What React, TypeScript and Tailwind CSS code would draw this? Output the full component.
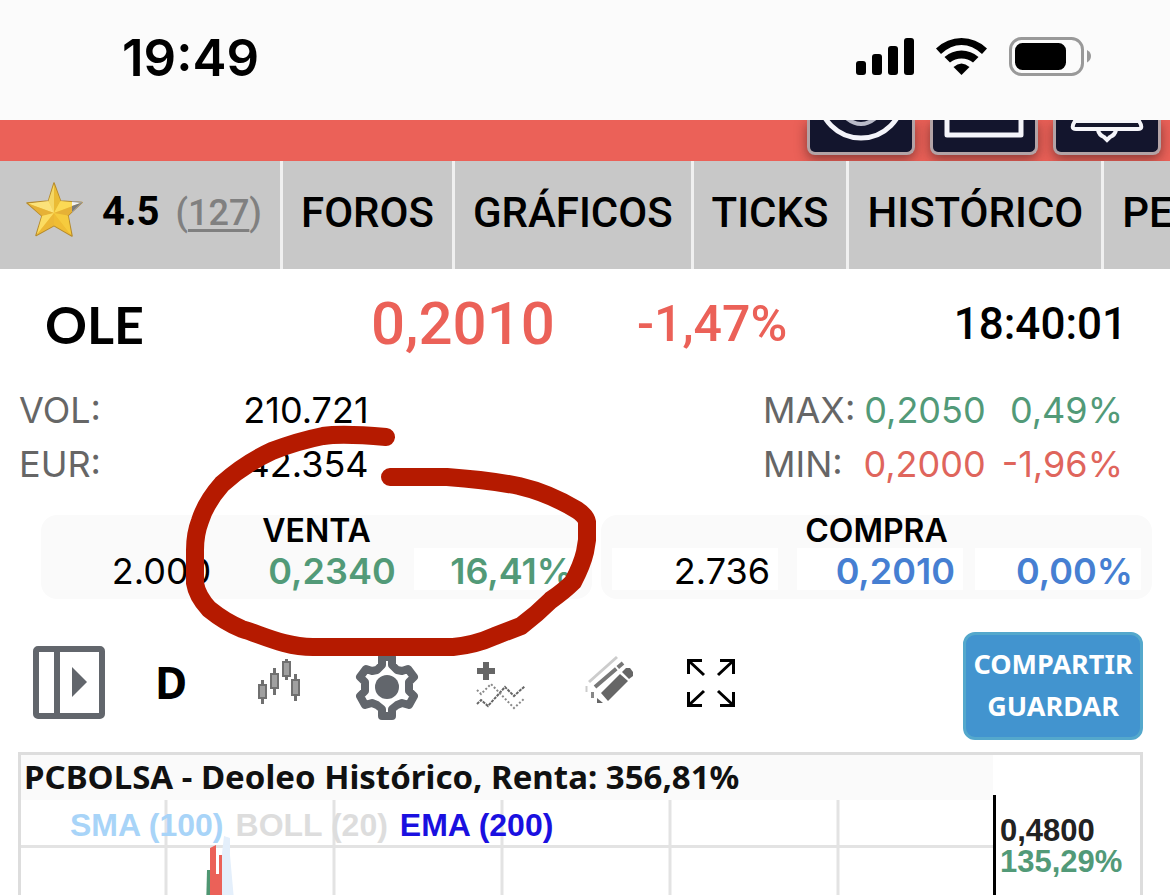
import React from 'react';

const tabs = ['FOROS', 'GRÁFICOS', 'TICKS', 'HISTÓRICO', 'PERFIL'];

const legend = [
  { label: 'SMA (100)', className: 'text-[#a8d4f8]' },
  { label: 'BOLL (20)', className: 'text-[#dddddd]' },
  { label: 'EMA (200)', className: 'text-[#1a10e0]' },
];

const StatusBar: React.FC = () => (
  <header className="flex h-[120px] shrink-0 items-start justify-between bg-[#fbfbfb] pl-[122px] pr-[79px] pt-[28px]">
    <time className="text-[51px] font-semibold leading-[60px]">19:49</time>
    <svg className="mt-[6px] h-[44px] w-[236px]" viewBox="855 34 236 44" role="img" aria-label="Cobertura, wifi y batería">
      <rect x="856" y="61" width="10" height="14" rx="3" />
      <rect x="872" y="54" width="10" height="21" rx="3" />
      <rect x="888" y="46" width="10" height="29" rx="3" />
      <rect x="904" y="38" width="10" height="37" rx="3" />
      <path d="M936 48.500Q947 38 961.500 38T987 48.500L982 54Q972.500 45 961.500 45T941 54Z" />
      <path d="M944.500 57Q952 50.500 961.500 50.500T978.500 57L973 62.500Q968 58.500 961.500 58.500T950 62.500Z" />
      <path d="M953.500 67Q961.500 60 969.500 67L961.500 75Z" />
      <rect x="1010.500" y="38.500" width="72" height="36" rx="11" fill="none" stroke="#999" strokeWidth="3" />
      <rect x="1015" y="43" width="51" height="27" rx="7.500" />
      <path d="M1087 50Q1091 52 1091 56T1087 62.500Z" fill="#999" />
    </svg>
  </header>
);

const headerButton =
  'h-[35px] w-[108px] rounded-b-lg border-3 border-t-0 border-[#b3a3a6] bg-[#13152d] shadow-[0_4px_12px_rgba(40,20,20,0.5)]';

const HeaderStrip: React.FC = () => (
  <div className="flex h-[41px] shrink-0 items-start justify-end gap-[15px] overflow-hidden bg-[#eb6158] pr-[9px]">
    <button className={headerButton} aria-label="Cuenta">
      <svg className="h-8 w-full" viewBox="0 0 102 32" fill="none" stroke="#f4f4fa" strokeWidth="5">
        <circle cx="51" cy="-24" r="42" />
        <path d="M33 -5Q51 13 69 -5" stroke="#b9bac8" strokeWidth="4" />
      </svg>
    </button>
    <button className={headerButton} aria-label="Mensajes">
      <svg className="h-8 w-full" viewBox="0 0 102 32" fill="none" stroke="#f4f4fa" strokeWidth="5">
        <path d="M14 -4V15H88V-4" strokeLinejoin="round" />
      </svg>
    </button>
    <button className={headerButton} aria-label="Avisos">
      <svg className="h-8 w-full" viewBox="0 0 102 32" fill="none" stroke="#f4f4fa" strokeWidth="4">
        <path d="M19 1H83Q88 9 82 9H20Q14 9 19 1Z" />
        <path d="M42 10Q43 15 48 17L51 20L54 17Q59 15 60 10" />
      </svg>
    </button>
  </div>
);

const Star: React.FC = () => (
  <svg className="h-[56px] w-[58px] shrink-0" viewBox="26 182 58 56" aria-hidden="true">
    <path
      d="M54 183L60.500 201L82 202.500L68 215.500L72 236L54 225.500L36 235.500L42 216L27 203L48.500 201Z"
      fill="#f7cd3c"
      stroke="#b58a2c"
      strokeWidth="1.500"
      strokeLinejoin="round"
    />
    <path d="M54 184L54 213L48.500 201Z" fill="#f4d765" />
    <path d="M54 184L60.500 201L54 213Z" fill="#eabb35" />
    <path d="M28 203.500L48.500 201L54 213Z" fill="#fbe27a" />
    <path d="M28 203.500L54 213L42 216Z" fill="#e6b136" />
    <path d="M42 216L54 213L36.500 235Z" fill="#fbdc62" />
    <path d="M54 213L54 225.500L36.500 235Z" fill="#ecb836" />
    <path d="M54 213L71.500 235.500L54 225.500Z" fill="#f0bd34" />
    <path d="M54 213L68 215.500L71.500 235.500Z" fill="#f6cb3e" />
    <path d="M60.500 201L81 203L54 213Z" fill="#fbd955" />
    <path d="M81 203L68 215.500L54 213Z" fill="#e6b136" />
    <path d="M72 201.500L82 202.500L72 206Z" fill="#f3f3f3" />
    <path d="M82 202.500L72 212V206Z" fill="#7c7c7c" />
    <path d="M72 201.500L82 202.500L72 212" fill="none" stroke="#999" strokeWidth="1" />
  </svg>
);

const Tabs: React.FC = () => (
  <nav className="flex h-[108px] shrink-0 overflow-hidden bg-[#c8c8c8] font-['Roboto',sans-serif] text-[42px] font-medium leading-[104px]">
    <div className="flex w-[280px] shrink-0 items-start pl-[26px]">
      <div className="pt-[21px]">
        <Star />
      </div>
      <span className="ml-[18px] text-[40px] font-bold leading-[102px]">4.5</span>
      <span className="ml-[16px] text-[36px] text-[#808080]">
        (
        <a href="#votos" className="underline decoration-3 underline-offset-4">
          127
        </a>
        )
      </span>
    </div>
    {tabs.map((tab) => (
      <a key={tab} href={`#${tab.toLowerCase()}`} className="shrink-0 border-l-3 border-[#f0f0f0] px-[18px]">
        {tab}
      </a>
    ))}
  </nav>
);

const Quote: React.FC = () => (
  <section className="grid h-[93px] shrink-0 grid-cols-[326fr_266fr_490fr] items-center pl-[45px] pr-[43px] pt-[16px] font-['Roboto',sans-serif] font-medium leading-[76px]">
    <h1 className="font-['Lato',sans-serif] text-[52px] font-bold">OLE</h1>
    <strong className="text-[60px] font-medium text-[#eb6158]">0,2010</strong>
    <div className="flex items-center justify-between">
      <span className="text-[50px] text-[#eb6158]">-1,47%</span>
      <time className="text-[44px]">18:40:01</time>
    </div>
  </section>
);

const Stats: React.FC = () => (
  <table className="mt-[21px] w-full shrink-0 table-fixed text-[36px] leading-[54px]">
    <colgroup>
      <col className="w-[15%]" />
      <col />
      <col className="w-[42%]" />
      <col className="w-[11%]" />
      <col className="w-[15.5%]" />
    </colgroup>
    <tbody>
      <tr>
        <th scope="row" className="pl-[19px] text-left font-normal text-[#666]">VOL:</th>
        <td className="text-right">210.721</td>
        <th scope="row" className="pr-[5px] text-right font-normal text-[#666]">
          <span className="inline-block w-[92px] text-left">MAX:</span>
        </th>
        <td className="pr-[3px] text-right text-[#529a78]">0,2050</td>
        <td className="pr-[47px] text-right text-[#529a78]">0,49%</td>
      </tr>
      <tr>
        <th scope="row" className="pl-[19px] text-left font-normal text-[#666]">EUR:</th>
        <td className="text-right">42.354</td>
        <th scope="row" className="pr-[5px] text-right font-normal text-[#666]">
          <span className="inline-block w-[92px] text-left">MIN:</span>
        </th>
        <td className="pr-[3px] text-right text-[#df655c]">0,2000</td>
        <td className="pr-[47px] text-right text-[#df655c]">-1,96%</td>
      </tr>
    </tbody>
  </table>
);

const OrderBook: React.FC = () => (
  <section className="mt-6 flex shrink-0 gap-[9px] pl-[41px] pr-[18px]">
    <div className="h-[84px] flex-1 rounded-2xl bg-[#fafafa] px-[11px]">
      <h2 className="text-center text-[32px] font-semibold leading-[32px]">VENTA</h2>
      <div className="mt-px flex text-right text-[36px] leading-[46px]">
        <span className="mr-[19px] flex-1 pr-[6px]">2.000</span>
        <span className="mr-3 flex-1 pr-[6px] font-semibold text-[#529a78]">0,2340</span>
        <span className="h-[42px] flex-1 bg-white pr-2 font-semibold text-[#529a78]">16,41%</span>
      </div>
    </div>
    <div className="h-[84px] flex-1 rounded-2xl bg-[#fafafa] px-[11px]">
      <h2 className="text-center text-[32px] font-semibold leading-[32px]">COMPRA</h2>
      <div className="mt-px flex text-right text-[36px] leading-[46px]">
        <span className="mr-[19px] h-[42px] flex-1 bg-white pr-2">2.736</span>
        <span className="mr-3 h-[42px] flex-1 bg-white pr-2 font-semibold text-[#467fd2]">0,2010</span>
        <span className="h-[42px] flex-1 bg-white pr-2 font-semibold text-[#467fd2]">0,00%</span>
      </div>
    </div>
  </section>
);

const Toolbar: React.FC = () => (
  <section className="mt-[33px] flex h-[108px] shrink-0 pl-[33px] pr-[27px]">
    <button className="flex w-[72px] items-start pt-[14px]" aria-label="Abrir panel">
      <svg className="h-[73px] w-[72px]" viewBox="0 0 72 73">
        <rect x="3" y="3" width="66" height="67" rx="2" fill="none" stroke="#62666c" strokeWidth="6" />
        <path d="M24 3V70" stroke="#62666c" strokeWidth="6" />
        <path d="M39 21L54 36L39 51Z" fill="#62666c" />
      </svg>
    </button>
    <button className="w-[132px] pb-[9px] font-['Noto_Sans',sans-serif] text-[44px] font-bold">D</button>
    <button className="flex w-[84px] items-start justify-center pt-[26px]" aria-label="Tipo de gráfico">
      <svg className="h-[46px] w-[44px]" viewBox="257 658 44 46" stroke="#707070" strokeWidth="2" fill="#a0a0a0">
        <path d="M262.500 680V704M274.500 668V695M286.500 659V680M295.500 674V701" strokeWidth="3" />
        <rect x="259" y="685" width="7" height="13" />
        <rect x="271" y="674" width="7" height="14" />
        <rect x="283" y="662" width="7" height="14" />
        <rect x="292" y="680" width="7" height="15" />
      </svg>
    </button>
    <button className="flex w-[132px] items-start justify-center pt-[22px]" aria-label="Ajustes">
      <svg className="h-[66px] w-[66px]" viewBox="0 0 66 66">
        <path
          d="M28 3H38V11L43 16L48 17L54 15L60 23L55 28V37L60 42L55 51L48 49L43 51L38 55V62H28V55L23 51L18 49L11 51L6 42L11 37V28L6 23L12 15L18 17L23 16L28 11Z"
          fill="none"
          stroke="#62666c"
          strokeWidth="8"
          strokeLinejoin="round"
        />
        <circle cx="33" cy="33" r="12" fill="#62666c" />
      </svg>
    </button>
    <button className="flex w-[96px] items-start justify-center pt-[28px]" aria-label="Añadir indicador">
      <svg className="h-[52px] w-[52px]" viewBox="475 660 52 52" fill="none" stroke="#666">
        <path d="M477 671H495M486 662V680" strokeWidth="6" />
        <path d="M477 704L481 700L488 706L505 687L514 696L525 686" strokeWidth="2" strokeDasharray="3 1" />
        <path d="M477 690L481 694L491 684L514 708L525 698" strokeWidth="2" stroke="#888" strokeDasharray="2 2" />
      </svg>
    </button>
    <button className="flex w-[120px] items-start justify-center pt-[23px]" aria-label="Dibujar">
      <svg className="h-[52px] w-[50px]" viewBox="584 655 50 52">
        <path d="M601 693L620 674L628 681L608 701Z" fill="#666" />
        <path d="M622 672L626 668H630L633 672V676L629 679Z" fill="#666" />
        <path d="M597 698L603 703H597Z" fill="#666" />
        <path d="M595 687L623 663" stroke="#777" strokeWidth="4" strokeDasharray="28 2" />
        <path d="M592.500 692V698" stroke="#888" strokeWidth="3" />
        <path d="M589 682L617 657" stroke="#ccc" strokeWidth="3" />
        <path d="M586.500 686V692" stroke="#ccc" strokeWidth="2" />
      </svg>
    </button>
    <button className="flex w-[84px] items-start justify-center pt-[27px]" aria-label="Pantalla completa">
      <svg className="h-[48px] w-[48px]" viewBox="0 0 48 48" fill="none" stroke="#000" strokeWidth="3">
        <path d="M15 1.500H1.500V15M33 1.500H46.500V15M15 46.500H1.500V33M33 46.500H46.500V33" />
        <path d="M2 2L17 16M46 2L31 16M2 46L17 32M46 46L31 32" />
      </svg>
    </button>
    <button className="ml-auto w-[180px] rounded-xl border-3 border-[#54a8cc] bg-[#4294cf] pb-[3px] font-['Noto_Sans',sans-serif] text-[27px] font-bold leading-[42px] text-white">
      COMPARTIR GUARDAR
    </button>
  </section>
);

const Chart: React.FC = () => (
  <section className="ml-[18px] mr-[27px] mt-3 flex min-h-0 flex-1 border-3 border-b-0 border-[#dddddd]">
    <div className="relative min-w-0 flex-1 overflow-hidden">
      <h2 className="h-[45px] whitespace-nowrap bg-[#fafafa] pl-[3px] font-['Noto_Sans',sans-serif] text-[33px] font-bold leading-[43px] text-[#111]">
        PCBOLSA - Deoleo Histórico, Renta: 356,81%
      </h2>
      <svg className="absolute left-0 top-[45px] h-[400px] w-full" aria-hidden="true">
        <path d="M145 0V400M313 0V400M481 0V400M649 0V400M817 0V400M0 46.500H2000" stroke="#e3e3e3" strokeWidth="3" />
        <path d="M200 62L203 36L209 38V55L213 100H200Z" fill="#e4effb" />
        <path d="M186 70H190V110H185Z" fill="#4f9672" />
        <path d="M189 110V48L195 45V74H198V55H201V110Z" fill="#eb6158" />
      </svg>
      <ul className="relative flex gap-3 pl-[49px] font-['Liberation_Sans',sans-serif] text-[32px] font-bold leading-[50px]">
        {legend.map((item) => (
          <li key={item.label} className={item.className}>
            {item.label}
          </li>
        ))}
      </ul>
    </div>
    <div className="w-[147px] shrink-0 pt-[40px]">
      <div className="h-full border-l-3 border-black pl-1 pt-[20px] font-['Liberation_Sans',sans-serif] text-[31px] font-bold leading-[31px]">
        <p className="text-[#222]">0,4800</p>
        <p className="text-[#529a78]">135,29%</p>
      </div>
    </div>
  </section>
);

export default function App() {
  return (
    <main className="relative flex h-screen flex-col overflow-hidden bg-white font-['Inter',sans-serif] text-black">
      <StatusBar />
      <HeaderStrip />
      <Tabs />
      <Quote />
      <Stats />
      <OrderBook />
      <Toolbar />
      <Chart />
      {/* hand-drawn mark around the ask price */}
      <svg
        className="pointer-events-none absolute left-[180px] top-[420px] h-[245px] w-[424px]"
        viewBox="180 420 424 245"
        fill="none"
        stroke="#b51a00"
        strokeWidth="18"
        strokeLinecap="round"
        strokeLinejoin="round"
        aria-hidden="true"
      >
        <path d="M386 437Q342 433 323 436Q298 441 272 451Q244 464 222 484Q206 502 200 521Q195 534 195 550V583Q197 596 209 609Q225 622 242 629C262 635 285 647 313 647H453Q475 645 495 636L521 626Q537 614 551 600Q564 591 573 582Q582 565 585 552L587 540V522Q586 516 577 510Q549 493 519 486Q489 480 447 477H390" />
      </svg>
    </main>
  );
}
